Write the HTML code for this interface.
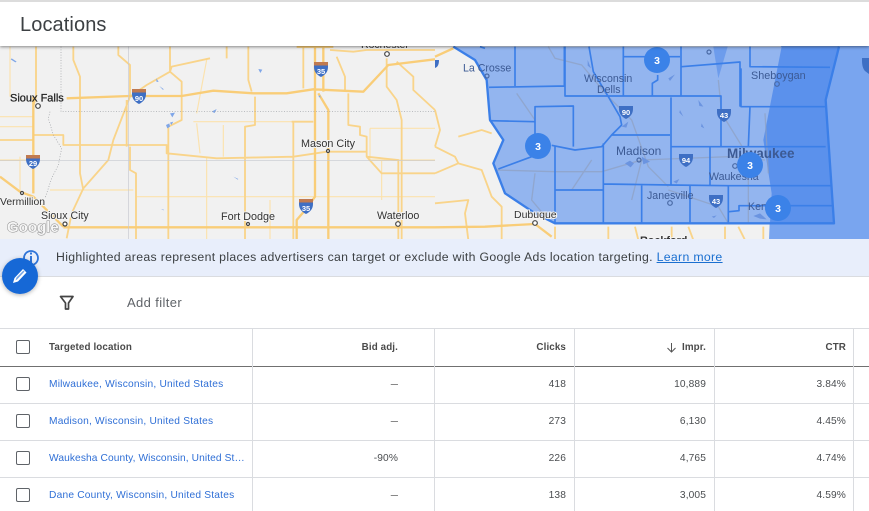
<!DOCTYPE html>
<html><head><meta charset="utf-8">
<style>
html,body{margin:0;padding:0;background:#fff;overflow:hidden}
#p{position:relative;width:869px;height:511px;overflow:hidden;font-family:"Liberation Sans",sans-serif;color:#3c4043;background:#fff}
.t{position:absolute;white-space:nowrap;line-height:14px;font-size:10.2px;letter-spacing:.12px;color:#4a4d50}
.r{text-align:right;width:120px}
.h{font-weight:bold;color:#4a4a4a;font-size:9.8px}
.l{color:#2f6fd6;left:49px;letter-spacing:.21px}
.d{font-size:13px;color:#777;letter-spacing:0}
.cb{position:absolute;left:16px;width:12px;height:12px;border:1.3px solid #5f6368;border-radius:2px;background:#fff}
.hl{position:absolute;background:#dadce0}
svg text{font-family:"Liberation Sans",sans-serif}
</style></head><body><div id="p">

<svg style="position:absolute;left:0;top:46px;filter:blur(.35px)" width="869" height="193" viewBox="0 46 869 193">
<rect x="0" y="46" width="869" height="193" fill="#f1f1f1"/>
<g transform="scale(.33333)" fill="none" stroke="#f9d48a" stroke-width="5.500" stroke-linejoin="round">
<g stroke-width="3.500" stroke="#fbe2ae">
<path d="M30 140V290M0 350H100M0 380H100M620 180L590 340M580 365H880M590 370L600 460M670 375V470M1110 385H1305M1110 385V480H1305M1145 480V600M0 480H90M620 470V720M810 600V720M410 590H1305M150 570H400M60 470V570"/>
</g>
<path d="M108 140V290L100 320V580M220 140V180L240 230V520L250 570M355 140V165L390 195V290M510 140V215L545 245V360L505 380V720M630 175L515 200L510 215L440 255L390 290L340 420L325 480L250 565L215 640L200 715M745 140V240L755 275M680 140V175M765 290V375L735 380V720M880 365V720M910 140V265M1010 170L1035 230V275M1045 280V375L1080 380V405L1100 410V470L1195 480V720M1160 175V260L1190 300L1205 360V720M1190 185L1240 230V270L1305 330M100 405H190V435H500V460L650 475L880 470L980 455H1100M380 300V440M390 440V510L408 520V720M1100 470L1145 520H1305M875 365H940M0 420H100M990 150L1060 155L1100 150H1305"/>
<path stroke="#f9cd78" stroke-width="7" d="M200 295L390 288H545L640 272L760 280L860 280L940 268L1090 275L1165 195L1305 178M945 140V590L920 625L890 660V720M970 140V275M955 280L985 330V720M100 290V580M0 530L60 575L100 590L190 680M890 140H1000M190 682H1305"/>
</g>
<!-- yellow roads between left half and region, and below region -->
<g transform="translate(435 0) scale(.33333)" fill="none" stroke="#f9d48a" stroke-width="5.500" stroke-linejoin="round">
<path d="M0 330L15 390L0 440M0 520L70 490L140 510L170 590L200 620V720M0 610L100 600L90 640L100 720M70 410L140 390L170 400M0 440L60 470L70 490M360 680V720M520 680V720M600 680L610 720M710 680V720M760 680L775 720M870 680V720M910 680L930 720M985 680V720"/>
<path stroke="#f9cd78" stroke-width="7" d="M0 170L55 145M0 682L150 680L300 672M300 672L350 710"/>
</g>
<g transform="scale(.33333)" fill="#7fa6e8">
<path d="M35 175l15 10-4 2-14-9zM468 235l8 10-6 1zM478 258l14 10-4 1zM510 340l15-2-8 14zM498 375l10-5 2 10-8 5zM510 368l10-3-6 10zM635 335l15-8-6 12zM775 207l12 2-6 10zM700 530l15 7-2 2zM955 288l6-2v8zM483 627l8 2v2z"/>
</g>
<g transform="scale(.33333)" fill="none" stroke="#c7c9d0" stroke-width="2">
<path stroke-dasharray="3 5" stroke="#9a9da2" d="M183 140V335H1305M150 335l-5 20 15 50 25 40-10 50-20 40-20 60"/>
<path d="M0 482H1305M385 140V720"/>
</g>
<!-- lake outside -->
<path d="M781 46H869V239H769L771 190L763 140Z" fill="#79a5ef"/>
<!-- region -->
<g transform="translate(435 0) scale(.33333)">
<path d="M55 140L120 180L155 240L165 360L205 420L175 490L210 580L300 640L360 670H1197L1172 300L1212 140Z" fill="#93b5ef"/>
<path d="M1040 140L985 420L1010 580L1005 670H1197L1172 300L1212 140Z" fill="#5b91ec"/>
<path d="M835 140L850 235L878 140Z" fill="#6d9cec"/>
<g fill="none" stroke="#8e9fc0" stroke-width="4" opacity=".7">
<path d="M340 140L360 175L440 195L520 290L590 360L640 500L700 560M245 280L300 360M180 510L360 515H500L620 480L880 470L990 480M300 520L290 600L340 660M850 240L860 340L940 470V670M410 570L470 480M700 570L760 590L850 620L880 670M620 480L590 600M990 340L1000 520"/>
</g>
<path d="M570 490l15-8 12 8-10 12zM620 470l25 15-20 8zM715 545l18-8-8 14zM955 648l20-8 20 18-20-2zM700 235l20-12-15 20zM735 330l10 20-12-12zM790 300l15 20-12-2zM800 370l8 15-10-5zM830 650l15-4-8 8z" fill="#6b94e0"/>
<path d="M458 180l10 25-10-8zM560 380l20-15-6 18z" fill="#6b94e0"/>
<g fill="none" stroke="#3b7fe8" stroke-width="5" stroke-linejoin="round">
<path stroke-width="7" d="M55 140L120 180L155 240L165 360L205 420L175 490L210 580L300 640L360 670H1197L1172 300L1212 140"/>
<path d="M150 145L135 140M240 140V258M162 262L388 258V140M390 140V288H520M462 140L475 215L520 290L555 350L560 375L530 405H705M565 140V288M565 170H735M652 288V250L668 240V225M738 140V288M740 200L915 186V320M945 140V200L1185 202M918 205V320H1172M520 288H858V320M708 292V555M858 292V440M945 320L940 440M163 362L300 365V320L415 318V440M300 365V440M190 507L290 470M350 436L420 450L500 440L530 405M360 440V670M360 570H505M505 430V670M505 552L705 555L880 557H1190M620 555V670M765 557V670M880 557V670M708 440H1172M825 440V555M882 635L912 632V617L1192 617"/>
</g>
</g>
<!-- interstate shields -->
<g font-size="7.500" font-weight="bold" text-anchor="middle" fill="#fff">
<path d="M132 91h14v3c0 5-3 8-7 10c-4-2-7-5-7-10z" fill="#3e6fc4"/><path d="M132 89h14v3.500h-14z" fill="#c07a50"/><text x="139" y="101">90</text>
<path d="M26 156h14v3c0 5-3 8-7 10c-4-2-7-5-7-10z" fill="#3e6fc4"/><path d="M26 155h14v3.500h-14z" fill="#c07a50"/><text x="33" y="166">29</text>
<path d="M314 64h14v3c0 5-3 8-7 10c-4-2-7-5-7-10z" fill="#3e6fc4"/><path d="M314 62h14v3.500h-14z" fill="#c07a50"/><text x="321" y="74">35</text>
<path d="M299 201h14v3c0 5-3 8-7 10c-4-2-7-5-7-10z" fill="#3e6fc4"/><path d="M299 199h14v3.500h-14z" fill="#c07a50"/><text x="306" y="211">35</text>
<path d="M862 58h7v16l-4-3c-2-2-3-6-3-10z" fill="#3e6fc4"/>
<path d="M435 60h4c0 4-1 7-4 8z" fill="#3e6fc4"/>
<path d="M619 106h14v3c0 5-3 8-7 10c-4-2-7-5-7-10z" fill="#3e6fc4"/><text x="626" y="115">90</text>
<path d="M717 109h14v3c0 5-3 8-7 10c-4-2-7-5-7-10z" fill="#3e6fc4"/><text x="724" y="118">43</text>
<path d="M679 154h14v3c0 5-3 8-7 10c-4-2-7-5-7-10z" fill="#3e6fc4"/><text x="686" y="163">94</text>
<path d="M709 195h14v3c0 5-3 8-7 10c-4-2-7-5-7-10z" fill="#3e6fc4"/><text x="716" y="204">43</text>
</g>
<!-- dots -->
<g fill="#fff" stroke="#444" stroke-width="1.200">
<circle cx="38" cy="106" r="2.300"/><circle cx="22" cy="193" r="1.500"/><circle cx="65" cy="224" r="2"/><circle cx="387" cy="54" r="2.300"/><circle cx="328" cy="151" r="1.500"/><circle cx="248" cy="224" r="1.500"/><circle cx="398" cy="224" r="2.300"/><circle cx="535" cy="223" r="2.300"/>
</g>
<g fill="none" stroke="#4a6aa5" stroke-width="1.200">
<circle cx="487" cy="76" r="2"/><circle cx="709" cy="52" r="2"/><circle cx="777" cy="84" r="2.300"/><circle cx="639" cy="160" r="2"/><circle cx="735" cy="166" r="2.300"/><circle cx="670" cy="203" r="2.300"/>
</g>
<!-- labels -->
<g font-size="10.800" fill="#333" stroke="#f4f4f4" stroke-width="2" paint-order="stroke">
<text x="10" y="101.500" font-size="11" fill="#222" stroke="#222" stroke-width=".25">Sioux Falls</text>
<text x="301" y="147">Mason City</text>
<text x="41" y="219" font-size="10.600">Sioux City</text>
<text x="221" y="220">Fort Dodge</text>
<text x="377" y="219" font-size="10.700">Waterloo</text>
<text x="0" y="205" font-size="10.400">Vermillion</text>
<text x="514" y="218" font-size="10.500">Dubuque</text>
<text x="361" y="48" font-size="10.500">Rochester</text>
<text x="640" y="244" font-weight="bold">Rockford</text>
</g>
<g font-size="10.600" fill="#3c5a94">
<text x="463" y="71.500">La Crosse</text>
<text x="584" y="82">Wisconsin</text>
<text x="597" y="93">Dells</text>
<text x="751" y="79" font-size="10.800">Sheboygan</text>
<text x="616" y="155" font-size="12">Madison</text>
<text x="647" y="199">Janesville</text>
<text x="709" y="180">Waukesha</text>
<text x="748" y="210">Kenosha</text>
<text x="727" y="158" font-size="13.500" font-weight="bold">Milwaukee</text>
</g>
<text x="7" y="232" font-size="15" font-weight="bold" fill="#f6f6f6" stroke="#8a8a8a" stroke-width="1" paint-order="stroke">Google</text>
<g fill="#3b82e8">
<circle cx="657" cy="60" r="13"/><circle cx="538" cy="146" r="13"/><circle cx="750" cy="165" r="13"/><circle cx="778" cy="208" r="13"/>
</g>
<g fill="#fff" font-size="10.500" font-weight="bold" text-anchor="middle">
<text x="657" y="64">3</text><text x="538" y="150">3</text><text x="750" y="169">3</text><text x="778" y="212">3</text>
</g>
</svg>

<!-- header -->
<div style="position:absolute;left:0;top:0;width:869px;height:46px;background:#fff;border-top:2px solid #dcdcdc;box-sizing:border-box;box-shadow:0 1px 3px rgba(0,0,0,.45)"></div>
<div class="t" style="left:20px;top:13px;font-size:20px;line-height:24px;color:#3c4043;letter-spacing:.1px">Locations</div>

<!-- banner -->
<div style="position:absolute;left:0;top:239px;width:869px;height:38px;background:#e8eefb;border-bottom:1px solid #dadce0;box-sizing:border-box"></div>
<div class="t" style="left:56px;top:250px;font-size:12.300px;letter-spacing:.31px;color:#3c4043">Highlighted areas represent places advertisers can target or exclude with Google Ads location targeting. <span style="color:#1a6fd0;text-decoration:underline">Learn more</span></div>

<svg style="position:absolute;left:0;top:240px" width="60" height="60" viewBox="0 0 60 60">
<defs><filter id="sh" x="-30%" y="-30%" width="160%" height="160%"><feDropShadow dx="0" dy="1" stdDeviation="2" flood-color="#000" flood-opacity=".3"/></filter></defs>
<circle cx="31" cy="18" r="7" fill="none" stroke="#2f74d8" stroke-width="1.800"/><rect x="30" y="16" width="2" height="7" fill="#2f74d8"/><rect x="30" y="12.500" width="2" height="2" fill="#2f74d8"/>
<circle cx="20" cy="36" r="18" fill="#1768d6" filter="url(#sh)"/>
<path d="M13 43l1.500-5 8.500-9 3.500 3.500-8.500 9z" fill="#fff"/><path d="M15.500 40.500l1-3 7-7 1 1-7 7.500z" fill="#1768d6" opacity=".6"/>
</svg>

<!-- filter row -->
<svg style="position:absolute;left:59px;top:295px" width="16" height="16" viewBox="0 0 16 16"><path d="M1.500 1.500H14L9.500 8V14H6.500V8Z" fill="none" stroke="#444" stroke-width="1.700" stroke-linejoin="round"/></svg>
<div class="t" style="left:127px;top:295.500px;font-size:13px;color:#5f6368;letter-spacing:.38px">Add filter</div>

<!-- table lines -->
<div class="hl" style="left:0;top:328px;width:869px;height:1px"></div>
<div class="hl" style="left:0;top:366px;width:869px;height:1.300px;background:#707070"></div>
<div class="hl" style="left:0;top:403px;width:869px;height:1px"></div>
<div class="hl" style="left:0;top:440px;width:869px;height:1px"></div>
<div class="hl" style="left:0;top:477px;width:869px;height:1px"></div>
<div class="hl" style="left:252px;top:329px;width:1px;height:182px"></div>
<div class="hl" style="left:434px;top:329px;width:1px;height:182px"></div>
<div class="hl" style="left:574px;top:329px;width:1px;height:182px"></div>
<div class="hl" style="left:714px;top:329px;width:1px;height:182px"></div>
<div class="hl" style="left:853px;top:329px;width:1px;height:182px"></div>

<!-- header row -->
<div class="cb" style="top:340px"></div>
<div class="t h" style="left:49px;top:341px">Targeted location</div>
<div class="t h r" style="left:278px;top:341px">Bid adj.</div>
<div class="t h r" style="left:446px;top:341px">Clicks</div>
<div class="t h r" style="left:586px;top:341px">Impr.</div>
<div class="t h r" style="left:726px;top:341px">CTR</div>
<svg style="position:absolute;left:666px;top:342px" width="11" height="11" viewBox="0 0 11 11"><path d="M5.500 1V10M1.500 6L5.500 10L9.500 6" fill="none" stroke="#555" stroke-width="1"/></svg>

<!-- rows -->
<div class="cb" style="top:377px"></div><div class="t l" style="top:378px">Milwaukee, Wisconsin, United States</div>
<div class="t r d" style="left:278px;top:377px">–</div><div class="t r" style="left:446px;top:378px">418</div><div class="t r" style="left:586px;top:378px">10,889</div><div class="t r" style="left:726px;top:378px">3.84%</div>

<div class="cb" style="top:414px"></div><div class="t l" style="top:415px">Madison, Wisconsin, United States</div>
<div class="t r d" style="left:278px;top:414px">–</div><div class="t r" style="left:446px;top:415px">273</div><div class="t r" style="left:586px;top:415px">6,130</div><div class="t r" style="left:726px;top:415px">4.45%</div>

<div class="cb" style="top:451px"></div><div class="t l" style="top:452px;letter-spacing:.1px">Waukesha County, Wisconsin, United St…</div>
<div class="t r" style="left:278px;top:452px">-90%</div><div class="t r" style="left:446px;top:452px">226</div><div class="t r" style="left:586px;top:452px">4,765</div><div class="t r" style="left:726px;top:452px">4.74%</div>

<div class="cb" style="top:488px"></div><div class="t l" style="top:489px">Dane County, Wisconsin, United States</div>
<div class="t r d" style="left:278px;top:488px">–</div><div class="t r" style="left:446px;top:489px">138</div><div class="t r" style="left:586px;top:489px">3,005</div><div class="t r" style="left:726px;top:489px">4.59%</div>

</div></body></html>
